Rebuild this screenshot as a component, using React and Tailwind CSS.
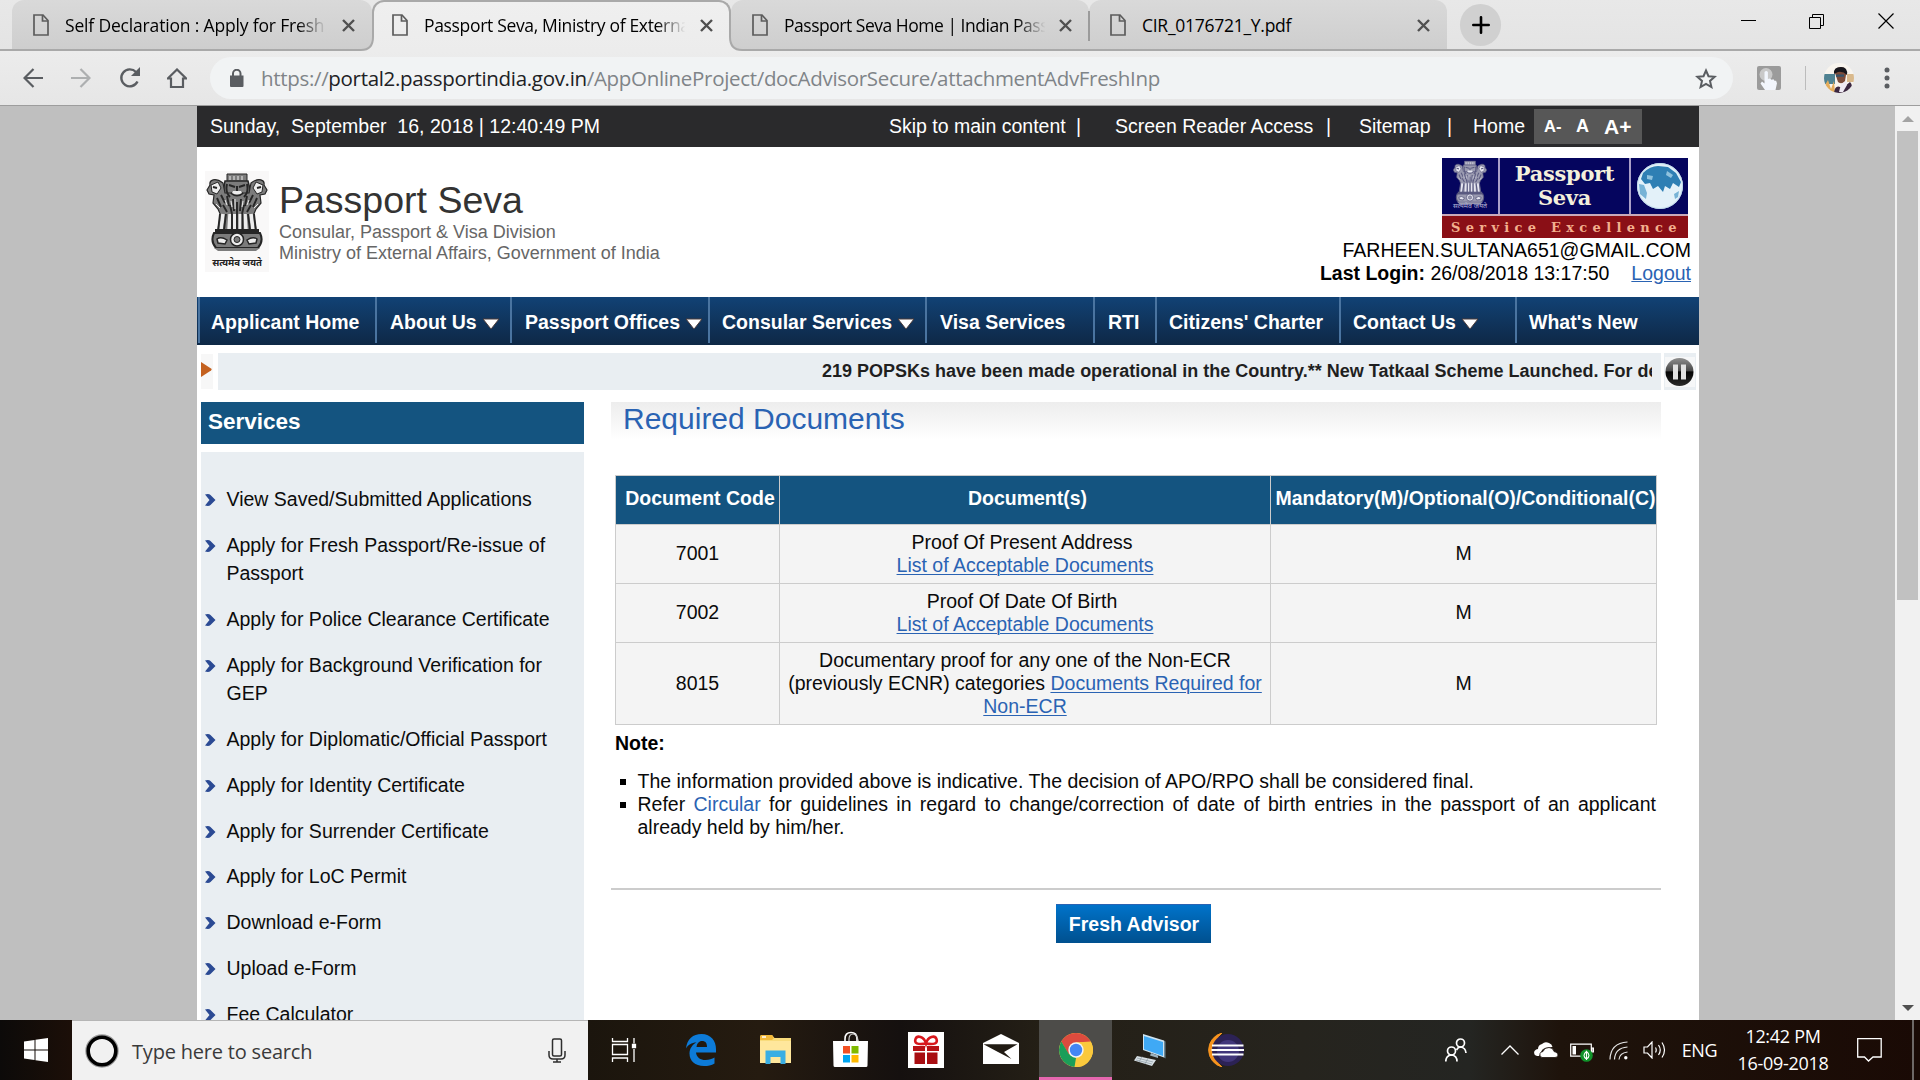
import React from "react";

const UI = "font-['Open_Sans','Noto_Sans',sans-serif]";

function FileIcon() {
  return (
    <svg width="16" height="22" viewBox="0 0 16 22" fill="none" stroke="#5c5c5c" strokeWidth="1.7" className="shrink-0">
      <path d="M1 1h9l5 5.5V21H1z" />
      <path d="M9.5 1v6H15" />
    </svg>
  );
}

function CloseX() {
  return (
    <svg width="13" height="13" viewBox="0 0 13 13" stroke="#505050" strokeWidth="2.4" className="shrink-0">
      <path d="M1 1l11 11M12 1L1 12" />
    </svg>
  );
}

function Flare({ side }) {
  return (
    <svg
      width="14"
      height="14"
      viewBox="0 0 14 14"
      className={side === "left" ? "absolute -left-[14px] bottom-0" : "absolute -right-[14px] bottom-0 -scale-x-100"}
    >
      <path d="M13 0V1Q13 13 1 13H0V14H14V0Z" fill="#ececec" />
      <path d="M13 0Q13 13 1 13H0" fill="none" stroke="#a9a9a9" strokeWidth="2" />
    </svg>
  );
}

function Tab({ title, active, shape, titleClass, fade }) {
  return (
    <div
      className={
        (active
          ? "relative z-10 h-[51px] rounded-t-[12px] border-x-2 border-t-2 border-[#a9a9a9] bg-gradient-to-b from-[#efefef] to-[#ececec] pl-[18px] pr-[16px] "
          : "relative h-[49px] bg-gradient-to-b from-[#d9d9d9] to-[#cecece] pl-[21px] pr-[17px] ") +
        "flex items-center " +
        shape
      }
    >
      {active && <Flare side="left" />}
      {active && <Flare side="right" />}
      <div className={"flex flex-1 items-center " + (active ? "-mt-[3px]" : "")}>
        <FileIcon />
        <div
          className={
            "ml-4 w-[264px] overflow-hidden whitespace-nowrap text-[17.5px] leading-6 text-black " +
            titleClass +
            (fade ? " [mask-image:linear-gradient(to_right,black_88%,transparent_99%)]" : "")
          }
        >
          {title}
        </div>
        <div className="ml-auto pt-px">
          <CloseX />
        </div>
      </div>
    </div>
  );
}

function TabStrip() {
  return (
    <div className="relative flex h-[51px] border-b-2 border-[#a9a9a9] bg-gradient-to-b from-[#e8e8e8] to-[#e4e4e4] pl-3">
      <Tab title="Self Declaration : Apply for Fresh" shape="w-[360px] rounded-t-[12px]" titleClass="tracking-[-0.17px]" fade />
      <Tab title="Passport Seva, Ministry of External Affairs" active shape="w-[359px]" titleClass="tracking-[-0.33px]" fade />
      <Tab title="Passport Seva Home | Indian Passport" shape="w-[358px] rounded-t-[12px]" titleClass="tracking-[-0.48px]" fade />
      <Tab title="CIR_0176721_Y.pdf" shape="w-[358px] rounded-t-[12px]" titleClass="tracking-[-0.27px]" />
      <div className="absolute left-[1088px] top-[11px] h-[30px] w-[2px] bg-[#9b9b9b]" />
      <div className="ml-[13px] mt-1 flex h-[42px] w-[41px] items-center justify-center rounded-full bg-[#d0d0d0]">
        <svg width="18" height="18" viewBox="0 0 18 18" stroke="#000" strokeWidth="2.6" strokeLinecap="round">
          <path d="M9 1.3v15.4M1.3 9h15.4" />
        </svg>
      </div>
      <div className="ml-auto mr-[26px] mt-[13px] flex h-4 items-start gap-[53px]">
        <svg width="15" height="16" viewBox="0 0 15 16" stroke="#000">
          <path d="M0 7.5h15" />
        </svg>
        <svg width="16" height="16" viewBox="0 0 16 16" fill="none" stroke="#000">
          <path d="M.5 4.5h11v11H.5zM3.5 4.5v-3h11v11h-3" />
        </svg>
        <svg width="16" height="16" viewBox="0 0 16 16" stroke="#000" strokeWidth="1.2">
          <path d="M.5 .5l15 15M15.5 .5l-15 15" />
        </svg>
      </div>
    </div>
  );
}

function Toolbar() {
  return (
    <div className="flex h-[55px] items-center border-b border-[#9d9d9d] bg-gradient-to-b from-[#ececec] to-[#e6e6e6] pl-[23px]">
      <svg width="20" height="20" viewBox="0 0 20 20" fill="none" stroke="#5a5d61" strokeWidth="2.2">
        <path d="M20 10H2M10.500 1L1.500 10l9 9" />
      </svg>
      <svg width="20" height="20" viewBox="0 0 20 20" fill="none" stroke="#adafb0" strokeWidth="2.2" className="ml-7">
        <path d="M0 10h18M9.500 1l9 9-9 9" />
      </svg>
      <svg width="22" height="22" viewBox="0 0 22 22" fill="none" className="ml-[28px]">
        <path d="M18.500 14.500A8.500 8.500 0 1 1 17 5" stroke="#5a5d61" strokeWidth="2.4" />
        <path d="M21 0v9h-9z" fill="#5a5d61" />
      </svg>
      <svg width="20" height="20" viewBox="0 0 20 20" fill="none" stroke="#5a5d61" strokeWidth="2.2" className="ml-[26px]">
        <path d="M.800 10.500L10 1.500l9.200 9H16V19H4v-8.500z" />
      </svg>
      <div className="ml-[23px] flex h-[42px] w-[1523px] items-center rounded-full bg-[#f1f3f4] pl-5 pr-4">
        <svg width="14" height="18" viewBox="0 0 14 18">
          <path d="M0 6.500h13.500V17a1 1 0 0 1-1 1H1a1 1 0 0 1-1-1z" fill="#5a5d61" />
          <path d="M3 7V4.500a3.700 3.700 0 0 1 7.500 0V7" fill="none" stroke="#5a5d61" strokeWidth="2" />
        </svg>
        <div className={"ml-[17px] whitespace-nowrap text-[20.5px] leading-7 tracking-[-0.32px] text-[#7f8488] " + UI}>
          https://<span className="text-[#202124]">portal2.passportindia.gov.in</span>/AppOnlineProject/docAdvisorSecure/attachmentAdvFreshInp
        </div>
        <svg width="22" height="21" viewBox="0 0 22 21" fill="none" stroke="#5a5d61" strokeWidth="2" className="ml-auto">
          <path d="M11 2.500l2.500 5.700 6.200.6-4.700 4.100 1.400 6.100L11 15.800 5.600 19 7 12.900 2.300 8.800l6.200-.6z" />
        </svg>
      </div>
      <svg width="24" height="24" viewBox="0 0 24 24" className="ml-6">
        <rect width="24" height="24" rx="2" fill="#9b9b9b" />
        <circle cx="9" cy="8.500" r="6.500" fill="#c9c9c9" />
        <path d="M7.500 6q1.700-2 3.400 0v7l2-.5 1.600 1.200 2-.4 1 1.500 1.600 0 .900 2.500-1.500 6.700H8l-4.500-6.500 1.500-2 2.500 2z" fill="#f2f6fd" />
      </svg>
      <div className="ml-6 h-6 w-px bg-[#bcbcbc]" />
      <svg width="30" height="30" viewBox="0 0 30 30" className="ml-[18px]">
        <defs>
          <clipPath id="face">
            <circle cx="15" cy="15" r="15" />
          </clipPath>
        </defs>
        <g clipPath="url(#face)">
          <rect width="30" height="30" fill="#f8f4ee" />
          <path d="M0 11h11v10H0z" fill="#4f8292" />
          <path d="M1 22l3-5 3 9 3-8 1 12H4z" fill="#e3ac5c" />
          <path d="M23 11h7v8h-7z" fill="#d9b98c" />
          <path d="M11 10q0-6 6-6 6 0 5 8l-1 6q-3 4-7 1z" fill="#7c4c3a" />
          <path d="M10 11q-1-7 7-7 7 0 6 8-4-4-9-3z" fill="#17161c" />
          <path d="M12 11.500h8v2.200h-8z" fill="#35536b" />
          <path d="M10 30q1-8 6-6l4 0 6-5q4 4 0 10l-5 3z" fill="#3b2740" />
          <path d="M17 21l5-3 1 4-4 7h-4z" fill="#efeaf3" />
        </g>
      </svg>
      <svg width="6" height="22" viewBox="0 0 6 22" fill="#5a5d61" className="ml-[30px]">
        <circle cx="3" cy="3" r="2.500" />
        <circle cx="3" cy="11" r="2.500" />
        <circle cx="3" cy="19" r="2.500" />
      </svg>
    </div>
  );
}

function TopBar() {
  return (
    <div className="flex h-[41px] shrink-0 items-center bg-[#2a2a2c] pl-[13px] text-[19.5px] text-white">
      <div className="w-[679px] whitespace-pre tracking-[0.01px]">Sunday,&nbsp; September&nbsp; 16, 2018 | 12:40:49 PM</div>
      <div className="w-[187px]">Skip to main content</div>
      <div className="w-[39px]">|</div>
      <div className="w-[211px]">Screen Reader Access</div>
      <div className="w-[33px]">|</div>
      <div className="w-[88px]">Sitemap</div>
      <div className="w-[26px]">|</div>
      <div className="w-[61px]">Home</div>
      <div className="flex h-[35px] w-[108px] items-center bg-[#575757] pl-[10px] font-bold">
        <span className="w-[32px] text-[16.5px]">A-</span>
        <span className="w-[28px] text-[18px]">A</span>
        <span className="text-[21px]">A+</span>
      </div>
    </div>
  );
}

function Emblem({ ink, mid, light, className }) {
  return (
    <svg viewBox="0 0 64 90" className={className} fill="none">
      <path d="M22 2h20v8H22z" fill={mid} stroke={ink} />
      <path d="M25 4v4M29 4v4M33 4v4M37 4v4" stroke={light} />
      <path d="M20 9h23l3 12-6 8H24l-6-8z" fill={mid} stroke={ink} strokeWidth="1.500" />
      <path d="M18 11C10 5 4 8 5 13l-3 5 2 4 5 1-1 8 5 6 3 7h32l3-7 5-6-1-8 5-1 2-4-3-5c1-5-5-8-13-2l-2 10H20z" fill={mid} stroke={ink} strokeWidth="1.200" />
      <path d="M6 13l7-3 3 6-4 6-5-2zM58 13l-7-3-3 6 4 6 5-2z" fill={light} stroke={ink} />
      <path d="M8 15l4 1M56 15l-4 1M24 13l6 2M40 13l-6 2M32 14v5M26 21q6 5 12 0M22 12q-2 8 3 13M42 12q2 8-3 13" stroke={ink} strokeWidth="2" />
      <path d="M28 19h8l1 2q-5 3-10 0z" fill={light} />
      <path d="M16 23l4 8M22 24l2 10M28 27l1 12M36 27l-1 12M42 24l-2 10M48 23l-4 8M18 33l4 7M46 33l-4 7M25 33l2 9M39 33l-2 9M12 26l4 9M52 26l-4 9M32 30v12" stroke={ink} strokeWidth="1.900" />
      <path d="M20 28l2 5M26 29l1 6M30 27v10M38 29l-1 6M44 28l-2 5M11 32l4 4M53 32l-4 4" stroke={light} />
      <path d="M15 42l-3 17h40l-3-17z" fill={mid} />
      <path d="M18 42l-2 16M25 42l-1 16M40 42l1 16M46 42l2 16" stroke={light} strokeWidth="3.500" />
      <path d="M29.500 42v16M35 42v16" stroke={light} strokeWidth="3" />
      <path d="M15 42l-2 17M21 42l-2 16M27 42v16M32 42v16M37.500 42v16M43 42l2 16M49 42l2 17" stroke={ink} strokeWidth="1.900" />
      <path d="M10 57h44v5H10z" fill={ink} />
      <path d="M9 61q-4 8 2 15h42q6-7 2-15z" fill={mid} stroke={ink} strokeWidth="2" />
      <path d="M12 67q4-3 10 1l-2 4-7-1zM52 67q-4-3-10 1l2 4 7-1z" fill={light} stroke={ink} strokeWidth="1.500" />
      <circle cx="32" cy="67.500" r="6.500" fill={light} stroke={ink} strokeWidth="1.500" />
      <circle cx="32" cy="67.500" r="3" fill={mid} stroke={ink} />
      <path d="M9 76h46l-4 3H13z" fill={mid} />
    </svg>
  );
}

function Banner() {
  return (
    <div className="flex h-[80px] w-[246px] flex-col">
      <div className="flex h-[56px] bg-[#05055e]">
        <div className="flex w-[56px] flex-col items-center pt-[2px]">
          <Emblem ink="#5a5a80" mid="#9a9ab0" light="#e6e6f0" className="h-[50px] w-[36px]" />
          <div className="-mt-[7px] text-[7px] leading-[8px] text-[#b9b9d8] font-['Noto_Sans_Devanagari','Noto_Sans',sans-serif]">सत्यमेव जयते</div>
        </div>
        <div className="flex w-[133px] flex-col items-center border-x-2 border-[#a9a0c8] pt-[4px] text-center font-['DejaVu_Serif',serif] text-[21px] font-bold leading-[24px] tracking-[-0.3px] text-[#f4f0dc]">
          <div>Passport</div>
          <div>Seva</div>
        </div>
        <div className="flex flex-1 items-center justify-center">
          <svg width="48" height="48" viewBox="0 0 48 48">
            <defs>
              <clipPath id="globe">
                <circle cx="24" cy="24" r="23" />
              </clipPath>
            </defs>
            <circle cx="24" cy="24" r="23" fill="#e3f1f9" />
            <g clipPath="url(#globe)" fill="#2e7fb4">
              <path d="M7 11Q14 4 22 4l10 1 8 6 5 9-2 5-6-4-3 6-5-3-2 6-5-6-5 3-3-6-5 1-4-5z" />
              <path d="M11 13l6 1-1 4-5-1zM31 9l6 4-2 3-5-3z" fill="#8fc2de" />
              <path d="M3 22l5 1 3 8-1 6-6-5zM38 32l5-3-1 6-3 2z" fill="#77b3d6" />
            </g>
            <circle cx="24" cy="24" r="22.500" fill="none" stroke="#bcd9ea" />
          </svg>
        </div>
      </div>
      <div className="flex h-[24px] items-center whitespace-nowrap border-t-2 border-[#c9a9b9] bg-[#8a0f16] pl-[9px] font-['DejaVu_Serif',serif] text-[13px] font-bold tracking-[5.300px] text-[#f3b08e]">
        Service Excellence
      </div>
    </div>
  );
}

function Header() {
  return (
    <div className="flex h-[150px] shrink-0 justify-between pl-2 pr-[8px]">
      <div className="flex pt-6">
        <div className="flex h-[101px] w-[64px] flex-col items-center bg-[#f9f8f8]">
          <Emblem ink="#262626" mid="#7c7c7c" light="#ededed" className="h-[92px] w-[64px]" />
          <div className="-mt-[5px] whitespace-nowrap text-[9.500px] font-bold leading-[12px] text-[#222] font-['Noto_Sans_Devanagari','Noto_Sans',sans-serif]">सत्यमेव जयते</div>
        </div>
        <div className="ml-[10px] pt-[6px]">
          <div className="text-[37.5px] leading-[46px] text-[#333333]">Passport Seva</div>
          <div className="-mt-px text-[18px] leading-[21px] text-[#666666]">
            Consular, Passport &amp; Visa Division
            <br />
            Ministry of External Affairs, Government of India
          </div>
        </div>
      </div>
      <div className="flex flex-col items-end pt-[11px] text-[19.5px] leading-[23px] text-black">
        <div className="mb-px mr-[3px]">
          <Banner />
        </div>
        <div>FARHEEN.SULTANA651@GMAIL.COM</div>
        <div>
          <b>Last Login:</b> 26/08/2018 13:17:50
          <span className="ml-[22px] text-[#2a63b3] underline">Logout</span>
        </div>
      </div>
    </div>
  );
}

const NAV = [
  ["Applicant Home", "w-[177px] pl-[11px]", false],
  ["About Us", "w-[135px] pl-[13px]", true],
  ["Passport Offices", "w-[198px] pl-[13px]", true],
  ["Consular Services", "w-[217px] pl-[12px]", true],
  ["Visa Services", "w-[168px] pl-[13px]", false],
  ["RTI", "w-[62px] pl-[13px]", false],
  ["Citizens' Charter", "w-[184px] pl-[12px]", false],
  ["Contact Us", "w-[176px] pl-[12px]", true],
  ["What's New", "w-[180px] pl-[12px]", false],
];

function Nav() {
  return (
    <div className="flex h-[48px] shrink-0 items-start bg-gradient-to-b from-[#114275] to-[#0e2846] pl-[1px]">
      {NAV.map(([label, width, menu]) => (
        <div key={label} className={"flex h-[46px] shrink-0 items-center whitespace-nowrap border-l-2 border-[#4a74a0] pt-[5px] text-[19.5px] font-bold text-white " + width}>
          {label}
          {menu && (
            <svg width="16" height="11" viewBox="0 0 16 11" className="ml-[6px] mt-[1px]">
              <path d="M0 1h16L8.500 10.500h-1z" fill="#fff" stroke="#4a3a38" strokeWidth="1" />
            </svg>
          )}
        </div>
      ))}
    </div>
  );
}

function Ticker() {
  return (
    <div className="mt-2 flex h-[37px] shrink-0 pl-1">
      <div className="mt-px flex h-[35px] w-[12px] items-start bg-[#f7f7f7] pt-[7px]">
        <svg width="12" height="17" viewBox="0 0 12 17">
          <path d="M0 1l10 6.500q1.500 1 0 2L0 16z" fill="#c4611f" />
        </svg>
      </div>
      <div className="ml-[5px] w-[1443px] bg-[#e9eef2] pr-[9px]">
        <div className="h-full overflow-hidden whitespace-nowrap pl-[604px] text-[18px] font-bold leading-[36px] text-[#1f1f1f]">
          219 POPSKs have been made operational in the Country.** New Tatkaal Scheme Launched. For details click here
        </div>
      </div>
      <div className="ml-[3px] flex w-8 items-center justify-center bg-[#e9eef2]">
        <svg width="30" height="30" viewBox="0 0 30 30">
          <defs>
            <linearGradient id="pause" x1="0" y1="0" x2="0" y2="1">
              <stop offset="0" stopColor="#8f8f8f" />
              <stop offset="0.45" stopColor="#4a4a4a" />
              <stop offset="0.5" stopColor="#050505" />
              <stop offset="1" stopColor="#2a2a2a" />
            </linearGradient>
          </defs>
          <rect width="30" height="30" fill="#f6f7f8" />
          <circle cx="14.500" cy="15" r="14" fill="url(#pause)" />
          <path d="M8 7.500h5v15H8zM16 7.500h5v15h-5z" fill="#e2e2e2" />
        </svg>
      </div>
    </div>
  );
}

const SERVICES = [
  "View Saved/Submitted Applications",
  "Apply for Fresh Passport/Re-issue of Passport",
  "Apply for Police Clearance Certificate",
  "Apply for Background Verification for GEP",
  "Apply for Diplomatic/Official Passport",
  "Apply for Identity Certificate",
  "Apply for Surrender Certificate",
  "Apply for LoC Permit",
  "Download e-Form",
  "Upload e-Form",
  "Fee Calculator",
];

function Sidebar() {
  return (
    <div className="flex w-[383px] shrink-0 flex-col">
      <div className="h-[42px] shrink-0 bg-[#145480] pl-[7px] text-[22.5px] font-bold leading-[40px] text-white">Services</div>
      <ul className="mt-2 flex flex-1 flex-col gap-[17.93px] bg-[#e9eef2] pl-1 pt-[33px] text-[19.5px] leading-[28px] text-[#0c0c0c]">
        {SERVICES.map((s) => (
          <li key={s} className="flex">
            <svg width="11" height="12" viewBox="0 0 11 12" className="mt-[9px] shrink-0">
              <path d="M0 .5q4-1 5.500.5L10.500 6l-5 5Q4 12.500 0 11.500L4.500 6z" fill="#2b4a94" />
            </svg>
            <span className="ml-[10.5px] w-[340px]">{s}</span>
          </li>
        ))}
      </ul>
    </div>
  );
}

function Link({ children }) {
  return <span className="text-[#2a63b3] underline decoration-1 underline-offset-2">{children}</span>;
}

function DocTable() {
  const cell = "border border-[#cccccc] p-0 align-middle";
  return (
    <table className="mt-[35px] ml-[4px] w-[1041px] table-fixed border-collapse text-center text-[19.5px] leading-[23px] text-[#0a0a0a]">
      <colgroup>
        <col className="w-[164px]" />
        <col className="w-[491px]" />
        <col className="w-[386px]" />
      </colgroup>
      <thead>
        <tr className="h-[49px] whitespace-nowrap bg-[#145480] font-bold text-white">
          <td className={cell + " pb-1 pl-[5px]"}>Document Code</td>
          <td className={cell + " pb-1 pl-[5px]"}>Document(s)</td>
          <td className={cell + " pb-1 pl-1"}>Mandatory(M)/Optional(O)/Conditional(C)</td>
        </tr>
      </thead>
      <tbody className="bg-[#f4f4f4]">
        <tr className="h-[59px]">
          <td className={cell + " pb-[2px]"}>7001</td>
          <td className={cell + " pb-px"}>
            <span className="mr-[6px]">Proof Of Present Address</span>
            <br />
            <Link>List of Acceptable Documents</Link>
          </td>
          <td className={cell + " pb-[2px]"}>M</td>
        </tr>
        <tr className="h-[59px]">
          <td className={cell + " pb-[2px]"}>7002</td>
          <td className={cell + " pb-px"}>
            <span className="mr-[6px]">Proof Of Date Of Birth</span>
            <br />
            <Link>List of Acceptable Documents</Link>
          </td>
          <td className={cell + " pb-[2px]"}>M</td>
        </tr>
        <tr className="h-[82px]">
          <td className={cell}>8015</td>
          <td className={cell}>
            Documentary proof for any one of the Non-ECR
            <br />
            (previously ECNR) categories <Link>Documents Required for</Link>
            <br />
            <Link>Non-ECR</Link>
          </td>
          <td className={cell}>M</td>
        </tr>
      </tbody>
    </table>
  );
}

function Content() {
  return (
    <div className="ml-[27px] w-[1050px] shrink-0">
      <div className="h-[38px] bg-gradient-to-b from-[#ededed] to-white pl-3 text-[30px] leading-[33px] text-[#2a63b3]">Required Documents</div>
      <DocTable />
      <div className="ml-[4px] mt-[7px] text-[19.5px] font-bold leading-[23px] text-black">Note:</div>
      <ul className="ml-[9px] mr-[5px] mt-[15px] flex flex-col text-[19.5px] leading-[23px] text-[#0a0a0a]">
        <li className="flex">
          <span className="mt-[9px] h-[6px] w-[6px] shrink-0 bg-black" />
          <span className="ml-[11.5px]">The information provided above is indicative. The decision of APO/RPO shall be considered final.</span>
        </li>
        <li className="flex">
          <span className="mt-[9px] h-[6px] w-[6px] shrink-0 bg-black" />
          <span className="ml-[11.5px] text-justify">
            Refer <span className="text-[#2a63b3]">Circular</span> for guidelines in regard to change/correction of date of birth entries in the passport of an applicant already held by him/her.
          </span>
        </li>
      </ul>
      <div className="mt-[49px] h-[2px] bg-[#cccccc]" />
      <div className="mt-[14px] flex justify-center pr-[5px]">
        <div className="h-[39px] w-[155px] border-t border-[#2a63b3] bg-gradient-to-b from-[#0073ca] to-[#00508f] pl-px text-center text-[19.5px] font-bold leading-[38px] text-white">Fresh Advisor</div>
      </div>
    </div>
  );
}

function Page() {
  return (
    <div className="flex h-[914px] bg-[#bfbfbf] font-['Liberation_Sans',Arial,sans-serif]">
      <div className="ml-[197px] flex w-[1502px] flex-col overflow-hidden bg-white">
        <TopBar />
        <Header />
        <Nav />
        <Ticker />
        <div className="mt-3 flex min-h-0 flex-1 overflow-hidden pl-1">
          <Sidebar />
          <Content />
        </div>
      </div>
      <div className="ml-auto flex w-[25px] flex-col items-center bg-[#f1f1f1]">
        <svg width="12" height="6" viewBox="0 0 12 6" className="mt-[10px]">
          <path d="M0 6l6-6 6 6z" fill="#a3a3a3" />
        </svg>
        <div className="mt-[9px] h-[469px] w-[21px] bg-[#c1c1c1]" />
        <svg width="12" height="6" viewBox="0 0 12 6" className="mb-[9px] mt-auto">
          <path d="M0 0h12L6 6z" fill="#505050" />
        </svg>
      </div>
    </div>
  );
}

function Cell({ children, active }) {
  return (
    <div className="flex w-[75px] shrink-0 justify-center">
      <div className={"flex h-[60px] w-[73px] items-center justify-center " + (active ? "border-b-[3px] border-[#e667b0] bg-[#4d4c49] pt-[3px]" : "")}>{children}</div>
    </div>
  );
}

function Taskbar() {
  return (
    <div
      className={
        "flex h-[60px] items-center bg-[linear-gradient(to_right,#0c0a09_0px,#1c0f08_72px,#1b150d_588px,#251b10_760px,#15100f_900px,#241f16_1040px,#26241e_1300px,#242522_1470px,#1e130b_1560px,#1a0a05_1920px)] text-white " +
        UI
      }
    >
      <div className="flex w-[72px] justify-center">
        <svg width="24" height="24" viewBox="0 0 24 24" fill="#fff">
          <path d="M0 3.500L10.500 2v9.500H0zM11.500 1.800L24 0v11.500H11.500zM0 12.500h10.500V22L0 20.500zM11.500 12.500H24V24l-12.500-1.800z" />
        </svg>
      </div>
      <div className="flex h-[60px] w-[516px] items-center border-t border-[#b5b5b5] bg-[#f1f1f1] pl-[13px] pr-[22px]">
        <svg width="34" height="34" viewBox="0 0 34 34" fill="none">
          <circle cx="17" cy="17" r="15.700" stroke="#9a9a9a" strokeWidth="2" />
          <circle cx="17" cy="17" r="13.800" stroke="#000" strokeWidth="3.600" />
        </svg>
        <div className="ml-[13px] whitespace-nowrap pt-[2px] text-[20px] tracking-[-0.2px] text-[#3a3a3a]">Type here to search</div>
        <svg width="18" height="25" viewBox="0 0 18 25" fill="none" stroke="#2e2e2e" strokeWidth="1.500" className="ml-auto">
          <rect x="4.500" y="1" width="9" height="17" rx="1.500" />
          <path d="M1 13v4q0 4 4 4h8q4 0 4-4v-4M9 21v3M5 24h8" />
        </svg>
      </div>
      <div className="flex">
        <Cell>
          <svg width="26" height="24" viewBox="0 0 26 24" fill="none" stroke="#fff" strokeWidth="1.300" className="mr-[3px]">
            <path d="M1.500 6.500h15v10h-15zM1.500 0v3.500h15V0M1.500 24v-4h15v4M23 0v5.500M23 11v13" />
            <path d="M21.500 6.500h3v3h-3z" fill="#fff" />
          </svg>
        </Cell>
        <Cell>
          <svg width="30" height="32" viewBox="0 0 30 32">
            <path d="M0 14.500C1 5 7 0 15.500 0 25 0 30 7 30 15v3.500H10c.5 5 4.500 7.500 9.500 7.500 3.500 0 6.500-1 9-2.500v6C25.500 31.500 22 32 18 32 9 32 3.500 27 3.500 19.500c0-5 3-9 7-11C5.500 8.500 2 11 0 14.500zM10.500 13h10.500c0-4-1.500-6-5-6-3 0-5 2.500-5.500 6z" fill="#0d7bd8" />
          </svg>
        </Cell>
        <Cell>
          <svg width="33" height="30" viewBox="0 0 33 30">
            <path d="M1 2q0-2 2-2h10l2.500 3H32v25H1z" fill="#f9dc7c" />
            <path d="M1 2q0-2 2-2h10l2 3-2 2H1z" fill="#f2b93b" />
            <path d="M3 2h4" stroke="#fff" strokeWidth="1.500" />
            <path d="M1 6h31v22H1z" fill="#ffe79c" />
            <path d="M6.500 29V15.500h20V29h-5v-7h-10v7z" fill="#3aaee3" />
          </svg>
        </Cell>
        <Cell>
          <svg width="35" height="36" viewBox="0 0 35 36" className="mb-[2px]">
            <path d="M12 11V8q0-6.500 6-6.500T24 8v3" fill="none" stroke="#fff" strokeWidth="1.600" />
            <path d="M16 11V8.500Q16 3 20 3t5.500 8" fill="none" stroke="#cfcfcf" strokeWidth="1.200" />
            <path d="M0 10h35l-.500 24.500q0 1.500-1.500 1.500H2Q.5 36 .5 34.500z" fill="#fff" />
            <path d="M10 15h7v7.500h-7z" fill="#f25022" />
            <path d="M18.500 15h7v7.500h-7z" fill="#7fba00" />
            <path d="M10 24h7v7.500h-7z" fill="#00a4ef" />
            <path d="M18.500 24h7v7.500h-7z" fill="#ffb900" />
          </svg>
        </Cell>
        <Cell>
          <svg width="36" height="36" viewBox="0 0 36 36">
            <path d="M0 0h36v36H0z" fill="#fff" />
            <path d="M6.500 20.500H17V32H6.500zM19 20.500h10.500V32H19z" fill="#a80e12" />
            <path d="M5 14h12v5H5zM19 14h12v5H19z" fill="#b81216" />
            <path d="M18 11.500C9 13 6 11 7.500 7S16 4 18 11.500c2-7.500 9-8.500 10.500-4.500S27 13 18 11.500z" fill="none" stroke="#d8181d" strokeWidth="2.500" />
          </svg>
        </Cell>
        <Cell>
          <svg width="36" height="30" viewBox="0 0 36 30" className="mb-[3px]">
            <path d="M0 9L18 0l18 9v21H0z" fill="#fff" />
            <path d="M.5 10.200h34L21 18l7.500 7L15 18z" fill="#211b13" />
          </svg>
        </Cell>
        <Cell active>
          <svg width="34" height="34" viewBox="0 0 34 34">
            <circle cx="17" cy="17" r="17" fill="#fbc93d" />
            <path d="M2.300 8.500A17 17 0 0 1 31.700 8.500L17 9.500 9.500 21z" fill="#dd4b3e" />
            <path d="M2.300 8.500L9.800 21 17 25l-1.500 8.900A17 17 0 0 1 2.300 8.500z" fill="#1b9e59" />
            <path d="M17 9.500h15.200A17 17 0 0 1 15.500 34L24 21z" fill="#fbc93d" />
            <circle cx="17" cy="17" r="7.700" fill="#f4f4f4" />
            <circle cx="17" cy="17" r="6.200" fill="#4486f4" />
          </svg>
        </Cell>
        <Cell>
          <svg width="34" height="32" viewBox="0 0 34 32">
            <path d="M9 0l21 6.500v17L9 16z" fill="#cfe4f1" />
            <path d="M10 2l19 6v14L10 15.300z" fill="#3fa9f5" />
            <path d="M30 6.500l1.500 1v17L30 23.500z" fill="#6d8796" />
            <path d="M17 19l7 2.500v2.500l-8-2.500z" fill="#9db2bd" />
            <path d="M3 22l19 4-4 6L0 26.500z" fill="#d9e1e6" />
            <path d="M3 24l16 4M2 26l16 4M8 22.500L5 28M14 24l-3 6" stroke="#8b99a2" strokeWidth=".7" />
          </svg>
        </Cell>
        <Cell>
          <svg width="36" height="34" viewBox="0 0 36 34">
            <path d="M14 0A17.500 17.500 0 0 0 14 34 22 22 0 0 1 14 0z" fill="#f7941e" stroke="#f7941e" />
            <circle cx="20" cy="17" r="16" fill="#2c2255" />
            <circle cx="20" cy="18" r="11" fill="#41367a" />
            <path d="M4 12.500h31.500M3.500 17h32.500M4 21.500h31.500" stroke="#fff" strokeWidth="2.200" />
          </svg>
        </Cell>
      </div>
      <div className="ml-[163px] flex items-center text-[18px]">
        <div className="mr-[6px] flex w-[60px] justify-center">
          <svg width="22" height="24" viewBox="0 0 22 24" fill="none" stroke="#fff" strokeWidth="1.700">
            <circle cx="15.500" cy="5" r="4" />
            <circle cx="6.500" cy="13" r="4" />
            <path d="M.8 23.500q0-6 5.700-6.500 5.500.5 5.500 6.500M11.500 12q1.500-3 4-3 5 .5 5.500 6" />
          </svg>
        </div>
        <div className="flex w-[36px] justify-center">
          <svg width="18" height="10" viewBox="0 0 18 10" fill="none" stroke="#fff" strokeWidth="1.300">
            <path d="M.5 9.500L9 1l8.500 8.500" />
          </svg>
        </div>
        <div className="flex w-[36px] justify-center">
          <svg width="24" height="16" viewBox="0 0 24 16">
            <path d="M3 14q-4-1-2.500-5Q2 7 4 7q0-4 4-5 3-3 7-1 3 1 3.500 4Q9 5 7.500 9L5 14z" fill="#fff" />
            <path d="M8 15.500q-3-1-2-4 1-2 3-2 1-4 6-4 4 0 5 4 4 .5 4 3.500 0 2.500-3 2.500z" fill="#fff" stroke="#1c120c" strokeWidth=".8" />
          </svg>
        </div>
        <div className="flex w-[36px] justify-center pt-1">
          <svg width="24" height="19" viewBox="0 0 24 19">
            <path d="M.7 1.200h20.600v12H.7zM22 5h1.500v4H22z" fill="none" stroke="#fff" strokeWidth="1.200" />
            <path d="M2.500 3h3.500v8.500H2.500z" fill="#fff" />
            <circle cx="16.500" cy="12.500" r="6.300" fill="#10932a" />
            <path d="M16.500 8.500q-5 4 0 7.500 5-3.500 0-7.500v8.500" fill="none" stroke="#fff" strokeWidth="1.100" />
          </svg>
        </div>
        <div className="flex w-[37px] justify-center">
          <svg width="19" height="19" viewBox="0 0 19 19" fill="none">
            <path d="M1 18.500Q1.500 2 18.500 1M5.500 18.500Q6 7 18.500 6M10 18.500Q10.500 12 18.500 11" stroke="#e6e6e6" strokeWidth="1.200" />
            <circle cx="16.800" cy="16.800" r="1.700" fill="#fff" />
          </svg>
        </div>
        <div className="flex w-[34px] justify-center">
          <svg width="23" height="18" viewBox="0 0 23 18" fill="none" stroke="#fff" strokeWidth="1.200">
            <path d="M1 6h3.500L9 1v16l-4.500-5H1zM12.500 6.500q1.500 2.500 0 5M15.500 4q3.500 5 0 10M19 1.500q5 7.500 0 15" />
          </svg>
        </div>
        <div className="w-[57px] text-center tracking-[-0.4px]">ENG</div>
        <div className="w-[110px] whitespace-nowrap text-center leading-[27px] tracking-[-0.3px]">
          12:42 PM
          <br />
          16-09-2018
        </div>
        <div className="flex w-[62px] justify-center">
          <svg width="25" height="24" viewBox="0 0 25 24" fill="none" stroke="#fff" strokeWidth="1.300">
            <path d="M.7.7h23.500V19H16l-4.500 4L7.500 19H.7z" />
          </svg>
        </div>
        <div className="ml-[12px] h-[60px] w-[2px] bg-[#6e6866]" />
      </div>
    </div>
  );
}

export default function App() {
  return (
    <div className="h-[1080px] w-[1920px] overflow-hidden bg-[#bfbfbf]">
      <div className={UI}>
        <TabStrip />
      </div>
      <Toolbar />
      <Page />
      <Taskbar />
    </div>
  );
}
